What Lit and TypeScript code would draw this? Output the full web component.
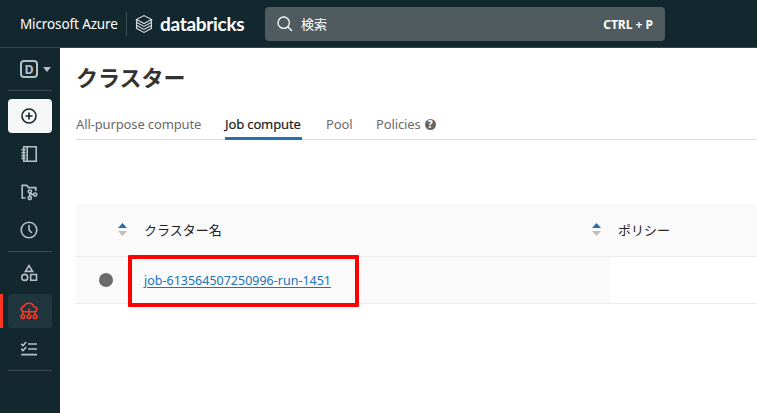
import { LitElement, html, css, svg } from "lit";
import { customElement, property } from "lit/decorators.js";

const icons: Record<string, unknown> = {
  plus: svg`<circle cx="9" cy="9" r="7"/><path d="M9 5.5v7M5.5 9h7"/>`,
  notebook: svg`<path d="M3.8 1.8h12.4v14.4H3.8zM7.2 1.8v14.4M1.5 4.6h4M1.5 7.6h4M1.5 10.6h4M1.5 13.4h4"/>`,
  repo: svg`<path d="M5.5 15H2.2V2.4h4.6l1.8 2.2h7.2V8"/><circle cx="9.8" cy="8.6" r="1.6"/><circle cx="9.8" cy="15" r="1.6"/><circle cx="15.2" cy="11.6" r="1.6"/><path d="M9.8 10.2v3.2M10.6 10l1 1.4h2"/>`,
  clock: svg`<circle cx="9" cy="9" r="7.8"/><path d="M9 4v5l2.8 2.9"/>`,
  shapes: svg`<path d="M9 1.6 12.6 7.4H5.4z"/><circle cx="4.7" cy="13.4" r="3"/><path d="M10.7 10.5h5.8v5.8h-5.8z"/>`,
  compute: svg`<path d="M4.2 9.7C2 9.4 1.2 8.200 1.3 7c.1-1.5 1.3-2.3 2.4-2.4C4.6 2.400 6.5 1.200 8.8 1.200c2.500 0 4.400 1.400 5 3.600 1.900 0 3 1.100 3 2.500s-1 2.400-2.800 2.400M9 6.400v6.400M2.900 12.800v-2c0-.7.4-1.100 1.100-1.100h10c.7 0 1.100.4 1.100 1.100v2"/><circle cx="2.900" cy="14.600" r="1.800"/><circle cx="9" cy="14.600" r="1.800"/><circle cx="15.100" cy="14.600" r="1.800"/>`,
  tasks: svg`<path d="M1.2 3.8 3 5.5 6.2 2M1.2 8.8 3 10.500 6.200 7M8 4h9M8 9h9M1.200 14.600H17"/>`,
};

@customElement("nav-item")
class NavItem extends LitElement {
  @property() icon = "";
  static styles = css`
    :host { display: flex; align-items: center; justify-content: center; height: 34px; margin: 0 8px 4px; border-radius: 4px; color: #b5c1c7; position: relative; }
    :host([primary]) { background: #f4f6f8; color: #13272e; }
    :host([active]) { background: #20363f; color: #ff3621; }
    :host([active])::before { content: ""; position: absolute; left: -8px; top: 0; width: 3px; height: 34px; background: #ff3621; }
    svg { width: 18px; height: 18px; fill: none; stroke: currentColor; stroke-width: 1.6; margin-right: 2px; }
  `;
  render() {
    return html`<svg viewBox="0 0 18 18">${icons[this.icon]}</svg>`;
  }
}

@customElement("sort-arrows")
class SortArrows extends LitElement {
  static styles = css`
    :host { display: block; width: 9px; height: 14px; }
    svg { display: block; }
  `;
  render() {
    return html`<svg width="9" height="14" viewBox="0 0 9 14"><path d="M0 5 4.500 0 9 5z" fill="#2272b4"/><path d="M0 8h9L4.500 13z" fill="#bfbfbf"/></svg>`;
  }
}

@customElement("app-root")
class AppRoot extends LitElement {
  static styles = css`
    :host { display: flex; flex-direction: column; width: 757px; height: 413px; overflow: hidden; background: #fff; font: 13px "Noto Sans", "Noto Sans CJK JP", sans-serif; white-space: nowrap; }
    header { box-sizing: border-box; flex: none; height: 48px; display: flex; align-items: center; background: #13272e; border-bottom: 1px solid #34464e; color: #fff; }
    .azure { width: 106px; margin-left: 20px; font-size: 13.5px; letter-spacing: -0.12px; }
    .sep { width: 1px; height: 24px; background: #3d4e56; }
    .layers { margin-left: 8px; width: 18px; height: 20px; fill: none; stroke: #d4dadd; stroke-width: 1.1; }
    .brand { margin-left: 7px; width: 97px; font: 700 19px/24px "Lato", sans-serif; letter-spacing: -0.3px; }
    .search { box-sizing: border-box; width: 400px; height: 34px; margin: 1px 0 0 8px; border-radius: 4px; background: #505b60; display: flex; align-items: center; padding: 0 12px; }
    .search svg { width: 16px; height: 16px; fill: none; stroke: #fff; stroke-width: 1.3; }
    .query { margin: -2px 0 0 8px; flex: 1; }
    .keys { font-size: 12px; font-weight: 700; }
    .body { flex: 1; display: flex; min-height: 0; }
    nav { width: 60px; flex: none; background: #13272e; }
    .account { height: 42px; display: flex; align-items: center; padding-left: 20px; box-sizing: border-box; gap: 5px; }
    .account b { box-sizing: border-box; width: 18px; height: 18px; border: 2px solid #b5c1c7; border-radius: 4px; color: #b5c1c7; font-size: 12.5px; line-height: 15px; text-align: center; }
    .caret { border: 4px solid transparent; border-top: 5px solid #b5c1c7; border-bottom: 0; }
    hr { border: 0; height: 1px; background: #3b4c54; margin: 0 8px; }
    .first { margin-bottom: 8px; }
    .mid { margin-bottom: 4px; }
    main { flex: 1; min-width: 0; padding-left: 16px; }
    h1 { margin: 0; height: 60px; font: 700 22px/57px "Noto Sans CJK JP", sans-serif; color: #333; }
    .tabs { display: flex; gap: 24px; height: 31px; border-bottom: 1px solid #ddd; color: #6b6b6b; line-height: 33px; letter-spacing: -0.13px; }
    .tab { height: 32px; box-sizing: border-box; }
    .t1 { width: 125px; }
    .t2 { width: 77px; color: #222; border-bottom: 3px solid #2272b4; -webkit-text-stroke: 0.2px #222; }
    .t3 { width: 26px; }
    .t4 { display: flex; align-items: center; gap: 4px; }
    .help { width: 11px; height: 11px; border-radius: 50%; background: #666; color: #fff; font-size: 10px; font-style: normal; font-weight: 800; line-height: 11px; text-align: center; }
    .table { margin-top: 64px; }
    .row { display: grid; grid-template-columns: 534px 1fr; border-bottom: 1px solid #ececec; color: #222; height: 46px; }
    .head { height: 52px; background: #fafafa; border-radius: 4px 0 0; }
    .cell { display: flex; align-items: center; position: relative; }
    .label { position: relative; top: -1px; }
    .head .cell:first-child { padding-left: 42px; }
    .head .cell:first-child .label { margin-left: 17px; flex: 1; }
    .head .cell:first-child sort-arrows:last-child { margin-right: 9px; }
    .policy { padding-left: 8px; }
    .data .cell:first-child { background: #fafafa; padding-left: 23px; }
    .dot { width: 14px; height: 14px; border-radius: 50%; background: #6b6b6b; margin-top: -1px; }
    a { color: #2272b4; margin-left: 31px; text-decoration: underline; text-underline-offset: 2px; font-size: 12.5px; }
    .mark { position: absolute; left: 52px; top: -2px; width: 231px; height: 52px; box-sizing: border-box; border: 4px solid #f00; border-radius: 1px; }
  `;
  render() {
    return html`
      <header>
        <span class="azure">Microsoft Azure</span><i class="sep"></i>
        <svg class="layers" viewBox="0 0 18 20"><path d="M1.5 5.5 9 1.5l7.5 4L9 9.6zM1.5 5.5v2.8L9 12.4l7.5-4.1V5.5M1.5 8.3v3L9 15.4l7.5-4.1v-3M1.5 11.3v3L9 18.4l7.5-4.1v-3"/></svg>
        <span class="brand">databricks</span>
        <div class="search">
          <svg viewBox="0 0 16 16"><circle cx="6.7" cy="6.7" r="5.7"/><path d="m11 11 4 4"/></svg>
          <span class="query">検索</span><span class="keys">CTRL + P</span>
        </div>
      </header>
      <div class="body">
        <nav>
          <div class="account"><b>D</b><i class="caret"></i></div>
          <hr class="first" />
          <nav-item icon="plus" primary></nav-item>
          <nav-item icon="notebook"></nav-item>
          <nav-item icon="repo"></nav-item>
          <nav-item icon="clock"></nav-item>
          <hr class="mid" />
          <nav-item icon="shapes"></nav-item>
          <nav-item icon="compute" active></nav-item>
          <nav-item icon="tasks"></nav-item>
          <hr />
        </nav>
        <main>
          <h1>クラスター</h1>
          <div class="tabs">
            <span class="tab t1">All-purpose compute</span>
            <span class="tab t2">Job compute</span>
            <span class="tab t3">Pool</span>
            <span class="tab t4">Policies<i class="help">?</i></span>
          </div>
          <div class="table">
            <div class="row head">
              <div class="cell"><sort-arrows></sort-arrows><span class="label">クラスター名</span><sort-arrows></sort-arrows></div>
              <div class="cell policy"><span class="label">ポリシー</span></div>
            </div>
            <div class="row data">
              <div class="cell"><i class="dot"></i><a>job-613564507250996-run-1451</a><div class="mark"></div></div>
              <div class="cell"></div>
            </div>
          </div>
        </main>
      </div>
    `;
  }
}
